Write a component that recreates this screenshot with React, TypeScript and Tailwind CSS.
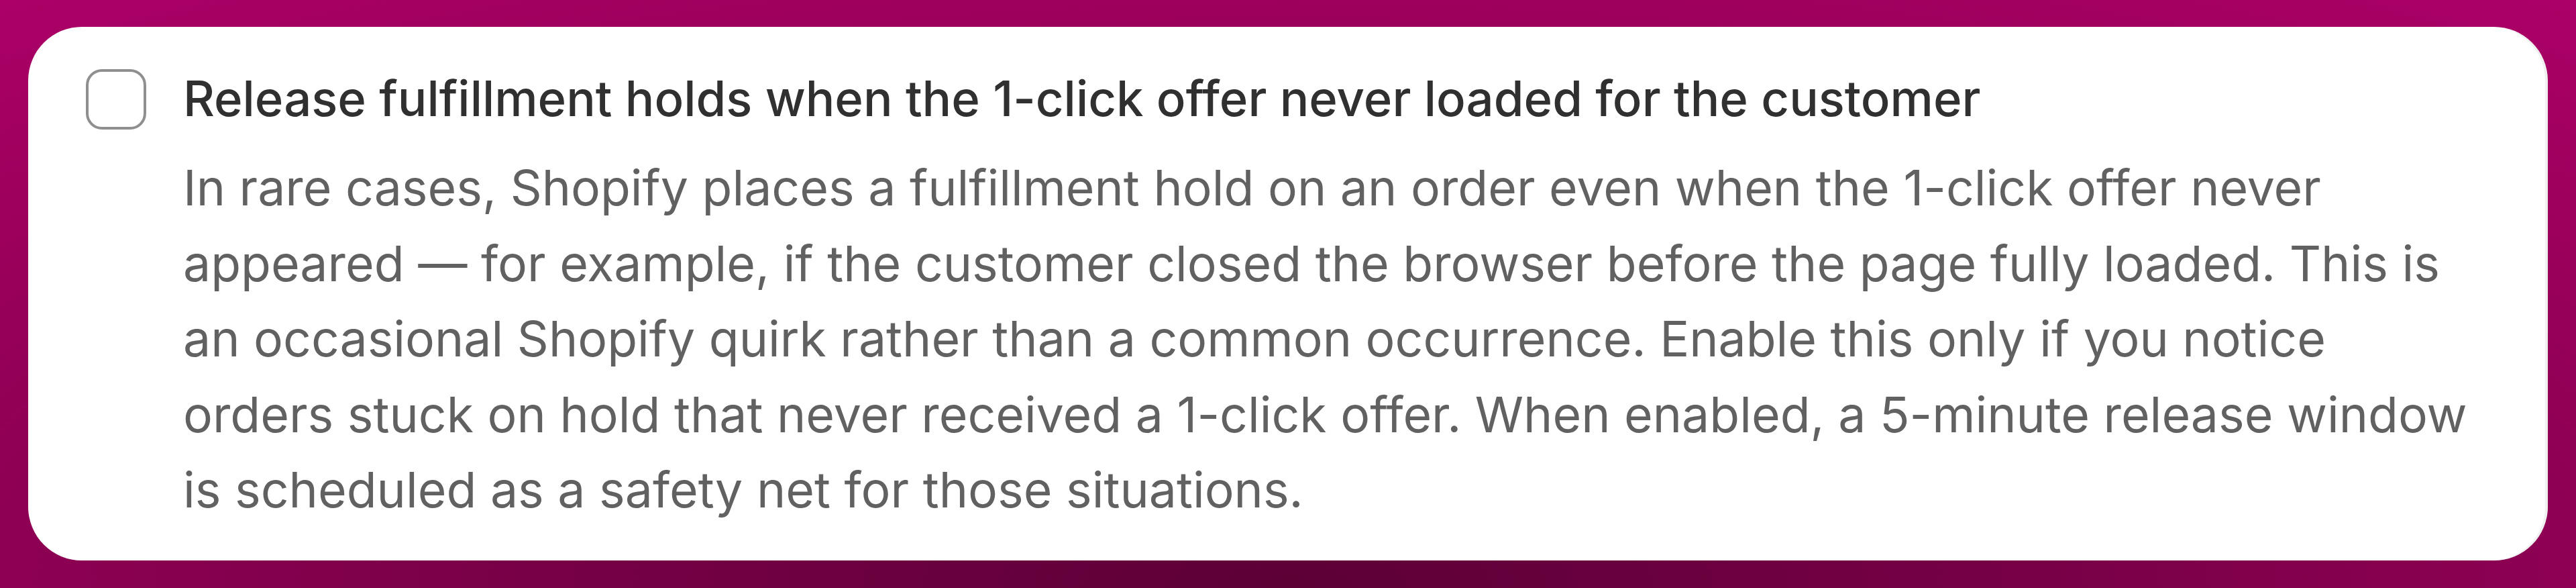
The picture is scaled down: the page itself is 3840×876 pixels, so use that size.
const description = [
  "In rare cases, Shopify places a fulfillment hold on an order even when the 1-click offer never",
  "appeared — for example, if the customer closed the browser before the page fully loaded. This is",
  "an occasional Shopify quirk rather than a common occurrence. Enable this only if you notice",
  "orders stuck on hold that never received a 1-click offer. When enabled, a 5-minute release window",
  "is scheduled as a safety net for those situations.",
];

export default function App() {
  return (
    <div className="h-[876px] w-full px-[42px] pt-[40px] bg-[radial-gradient(ellipse_90%_140%_at_50%_100%,#5c0036_0%,#7a0048_35%,#9c005c_70%,#b3006c_100%)] font-['Inter',sans-serif]">
      <div className="h-[795px] rounded-[80px] bg-white pl-[86px] pr-[60px] pt-[62px] shadow-[inset_-4px_0_0_rgba(0,0,0,0.06)]">
        <label className="flex items-start gap-[55px]">
          <span className="mt-[1px] block h-[90px] w-[90px] shrink-0 rounded-[24px] border-[4px] border-[#8f8f8f] bg-white" />
          <div className="flex-1">
            <div className="text-[72.5px] leading-[90px] font-medium text-[#303030]">
              Release fulfillment holds when the 1-click offer never loaded for the customer
            </div>
            <p className="mt-[32px] whitespace-nowrap text-[73.3px] leading-[112.5px] text-[#616161]">
              {description.map((line) => (
                <span key={line} className="block">{line}</span>
              ))}
            </p>
          </div>
        </label>
      </div>
    </div>
  );
}
